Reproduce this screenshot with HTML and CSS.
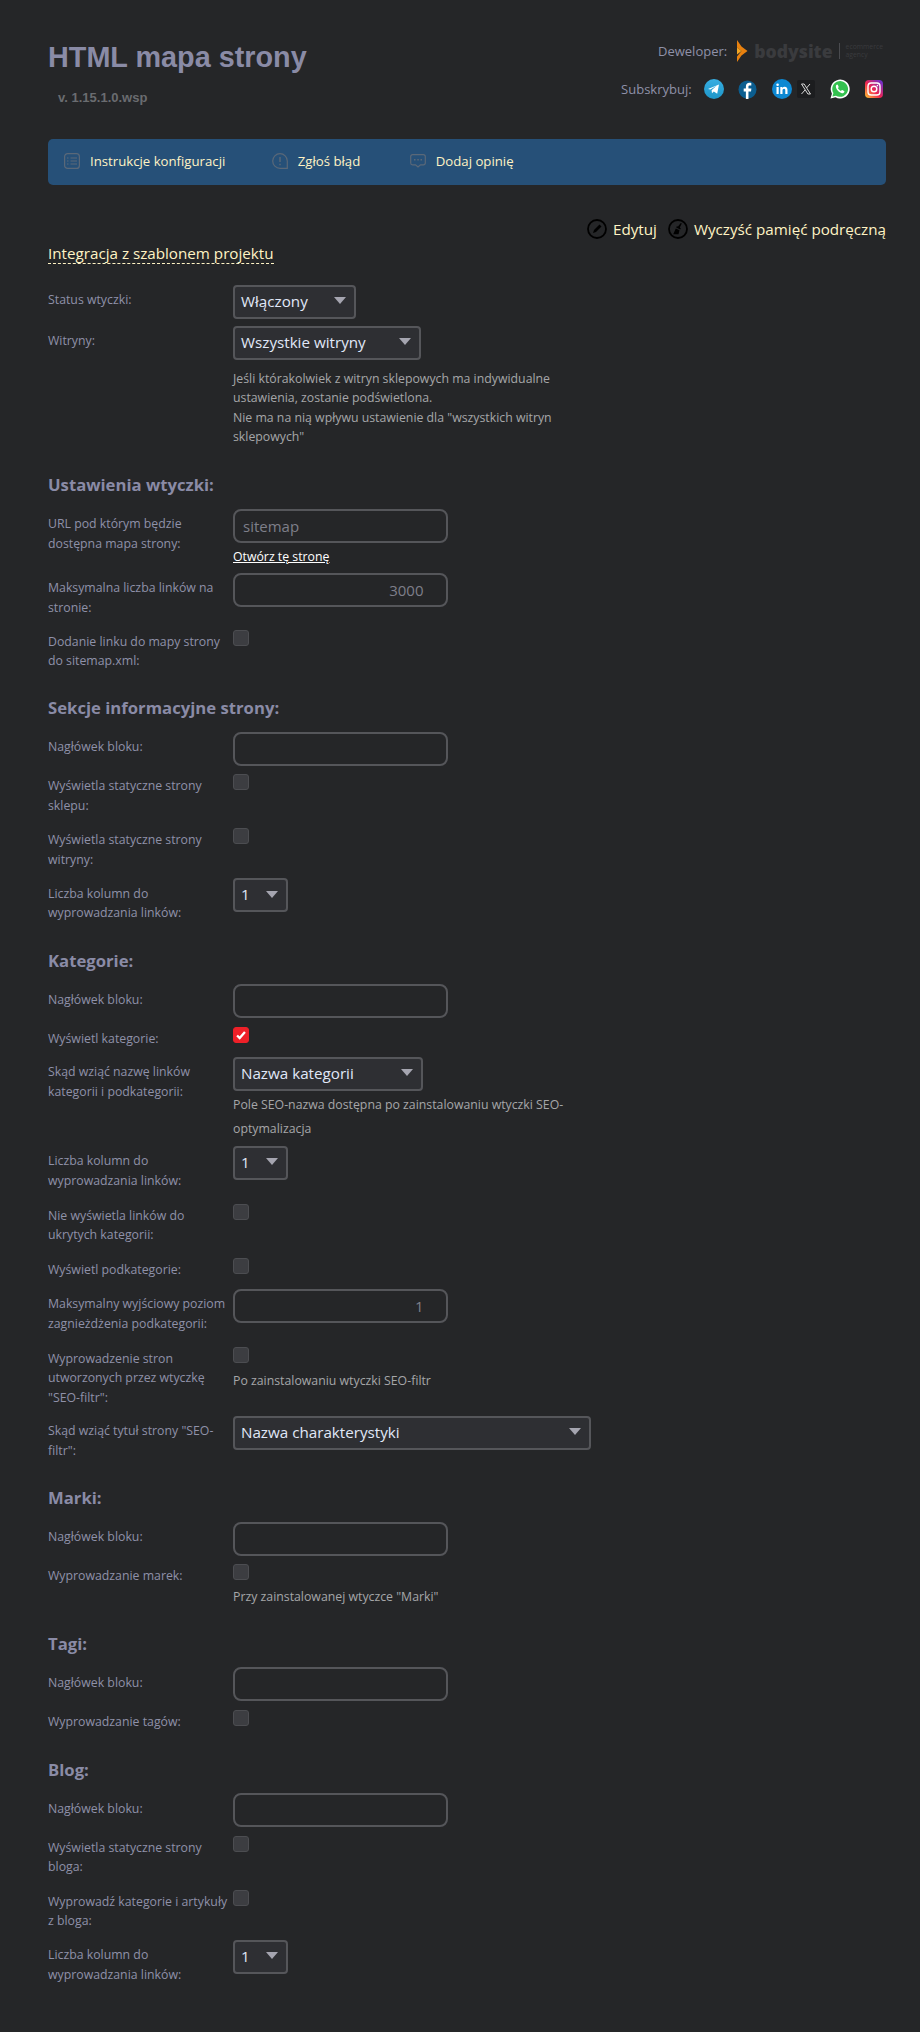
FILE: index.html
```html
<!DOCTYPE html>
<html lang="pl">
<head>
<meta charset="utf-8">
<title>HTML mapa strony</title>
<link rel="stylesheet" href="styles.css">
</head>
<body>
<div class="page">
  <header class="head">
    <div class="head-left">
      <h1>HTML mapa strony</h1>
      <div class="version">v. 1.15.1.0.wsp</div>
    </div>
    <div class="head-right">
      <div class="dev">
        <span>Deweloper:</span>
        <svg class="logo-mark" viewBox="0 0 12 22"><path d="M1 0l4.500 6.500L11.500 11l-6 4.500L1 22v-5.500L5.500 11 1 7.500z" fill="#e8810f"/><path d="M1 7.500L5.500 11 1 14.500z" fill="#f5a623"/></svg>
        <span class="logo-name">bodysite</span>
        <span class="logo-sep"></span>
        <span class="logo-sub">ecommerce<br>agency</span>
      </div>
      <div class="subs">
        <span class="subs-label">Subskrybuj:</span>
        <svg class="soc s-tg" viewBox="0 0 20 20"><defs><linearGradient id="tg" x1="0" y1="0" x2="0" y2="1"><stop offset="0" stop-color="#37aee2"/><stop offset="1" stop-color="#1e96c8"/></linearGradient></defs><circle cx="10" cy="10" r="10" fill="url(#tg)"/><path d="M4 10l11-4.400-1.800 9.200-3.400-2.400-1.800 1.800-.4-3 5-4.500-6.300 3.900z" fill="#fff"/></svg>
        <svg class="soc s-fb" viewBox="0 0 20 20"><circle cx="10" cy="10" r="9.500" fill="#0b5d8f"/><path d="M11 20v-8h2.700l.4-3H11V7.200c0-.9.300-1.400 1.500-1.400H14V3.200c-.5-.1-1.300-.2-2-.2-2.200 0-3.700 1.300-3.700 3.800V9H6v3h2.300v8z" fill="#fff"/></svg>
        <svg class="soc s-in" viewBox="0 0 20 20"><circle cx="10" cy="10" r="10" fill="#0d88d2"/><rect x="4.500" y="8" width="2.200" height="7" fill="#fff"/><circle cx="5.600" cy="5.800" r="1.300" fill="#fff"/><path d="M8.300 8h2.100v1c.5-.8 1.300-1.200 2.300-1.200 2 0 2.800 1.300 2.800 3.300V15h-2.200v-3.500c0-1-.3-1.700-1.200-1.700s-1.600.7-1.600 1.800V15H8.300z" fill="#fff"/></svg>
        <svg class="soc s-x" viewBox="0 0 18 18"><rect width="18" height="18" rx="2" fill="#1c1d1f"/><path d="M4.500 4h2.600l6.400 10h-2.600zM13 4l-3.500 4M8 10l-3.500 4" fill="none" stroke="#d8d8d8" stroke-width="1"/></svg>
        <svg class="soc s-wa" viewBox="0 0 20 20"><path d="M.5 19.500l1.400-4.800A9.500 9.500 0 1 1 5.500 18.300z" fill="#fff"/><path d="M2.400 17.600l1-3.500A7.900 7.900 0 1 1 6 16.700z" fill="#34c14f"/><path d="M7.300 5.500c-.9.200-1.600 1.300-1.400 2.500.4 2.600 3.300 5.600 6 6.200 1.300.2 2.300-.6 2.500-1.500.1-.4-.1-.6-.4-.8l-1.700-.8c-.3-.1-.5 0-.7.200l-.6.800c-1.300-.5-2.500-1.600-3.100-3l.6-.7c.2-.2.200-.5.100-.7l-.7-1.700c-.1-.3-.3-.4-.6-.3z" fill="#fff"/></svg>
        <svg class="soc s-ig" viewBox="0 0 18 18"><defs><linearGradient id="ig" x1="0" y1="1" x2="1" y2="0"><stop offset="0" stop-color="#fdc830"/><stop offset=".45" stop-color="#f0244f"/><stop offset="1" stop-color="#5b32e0"/></linearGradient></defs><rect width="18" height="18" rx="4" fill="url(#ig)"/><rect x="3" y="3" width="12" height="12" rx="3.200" fill="none" stroke="#fff" stroke-width="1.400"/><circle cx="9" cy="9" r="2.800" fill="none" stroke="#fff" stroke-width="1.400"/><circle cx="12.400" cy="5.600" r=".8" fill="#fff"/></svg>
      </div>
    </div>
  </header>

  <nav class="bar">
    <a class="bar-item">
      <svg class="bar-ico" viewBox="0 0 16 16"><rect x=".6" y=".6" width="14.800" height="14.800" rx="3" fill="none" stroke="currentColor" stroke-width="1.200"/><path d="M6.500 5h6.500M6.500 8h6.500M6.500 11h6.500M3 5h1.500M3 8h1.500M3 11h1.500" stroke="currentColor" stroke-width="1.200"/></svg>
      Instrukcje konfiguracji
    </a>
    <a class="bar-item">
      <svg class="bar-ico" viewBox="0 0 16 16"><path d="M8 .7a7.300 7.300 0 0 1 7.300 7.300v7.300H8A7.300 7.300 0 0 1 8 .7z" fill="none" stroke="currentColor" stroke-width="1.200"/><path d="M8 4v5M8 10.800v1.500" stroke="currentColor" stroke-width="1.400"/></svg>
      Zgłoś błąd
    </a>
    <a class="bar-item">
      <svg class="bar-ico" viewBox="0 0 16 14"><path d="M2.500 .7h11a1.800 1.800 0 0 1 1.800 1.800v6.500a1.800 1.800 0 0 1-1.800 1.800H10.500L8 13 5.500 10.800h-3A1.800 1.800 0 0 1 .7 9V2.500A1.800 1.800 0 0 1 2.500.7z" fill="none" stroke="currentColor" stroke-width="1.200"/><path d="M4 5.800h1.500M7.300 5.800h1.500M10.500 5.800H12" stroke="currentColor" stroke-width="1.500"/></svg>
      Dodaj opinię
    </a>
  </nav>

  <div class="actions">
    <a class="action"><svg class="act-ico" viewBox="0 0 20 20"><circle cx="10" cy="10" r="9" fill="none" stroke="#000" stroke-width="1.800"/><path d="M6 14l1-3 5.500-5.500 2 2L9 13z" fill="#000"/></svg>Edytuj</a>
    <a class="action"><svg class="act-ico" viewBox="0 0 20 20"><circle cx="10" cy="10" r="9" fill="none" stroke="#000" stroke-width="1.800"/><path d="M12.800 4l1 .5-2 4 1 .8-.6 1.200-4-2 .6-1.200 1.200.2zM7.800 9.400l3.700 1.900-1 4H5.200z" fill="#000"/></svg>Wyczyść pamięć podręczną</a>
  </div>

  <a class="integ">Integracja z szablonem projektu</a>

  <div class="row h41"><label>Status wtyczki:</label><div class="val"><span class="sel w-status">Włączony</span></div></div>
  <section class="sec">
  <div class="row h135"><label>Witryny:</label><div class="val"><span class="sel w-sites">Wszystkie witryny</span>
    <p class="hint hint-sites">Jeśli którakolwiek z witryn sklepowych ma indywidualne ustawienia, zostanie podświetlona.<br>Nie ma na nią wpływu ustawienie dla "wszystkich witryn sklepowych"</p></div></div>
  </section>

  <section class="sec">
  <h2>Ustawienia wtyczki:</h2>
  <div class="row h64"><label>URL pod którym będzie dostępna mapa strony:</label><div class="val"><span class="inp ph">sitemap</span><a class="open">Otwórz tę stronę</a></div></div>
  <div class="row h57"><label>Maksymalna liczba linków na stronie:</label><div class="val"><span class="inp num">3000</span></div></div>
  <div class="row h54 c"><label>Dodanie linku do mapy strony do sitemap.xml:</label><div class="val"><span class="chk"></span></div></div>
  </section>

  <section class="sec">
  <h2>Sekcje informacyjne strony:</h2>
  <div class="row h43"><label>Nagłówek bloku:</label><div class="val"><span class="inp"></span></div></div>
  <div class="row h54 c"><label>Wyświetla statyczne strony sklepu:</label><div class="val"><span class="chk"></span></div></div>
  <div class="row h50 c"><label>Wyświetla statyczne strony witryny:</label><div class="val"><span class="chk"></span></div></div>
  <div class="row h58"><label>Liczba kolumn do wyprowadzania linków:</label><div class="val"><span class="sel w-one">1</span></div></div>
  </section>

  <section class="sec">
  <h2>Kategorie:</h2>
  <div class="row h43"><label>Nagłówek bloku:</label><div class="val"><span class="inp"></span></div></div>
  <div class="row h30 c"><label>Wyświetl kategorie:</label><div class="val"><span class="chk on"><svg viewBox="0 0 16 16"><path d="M3.500 8.500l3 3 6-7" fill="none" stroke="#fff" stroke-width="2.600"/></svg></span></div></div>
  <div class="row h89"><label>Skąd wziąć nazwę linków kategorii i podkategorii:</label><div class="val"><span class="sel w-cat">Nazwa kategorii</span>
    <p class="hint hint-seo">Pole SEO-nazwa dostępna po zainstalowaniu wtyczki SEO-optymalizacja</p></div></div>
  <div class="row h58"><label>Liczba kolumn do wyprowadzania linków:</label><div class="val"><span class="sel w-one">1</span></div></div>
  <div class="row h54 c"><label>Nie wyświetla linków do ukrytych kategorii:</label><div class="val"><span class="chk"></span></div></div>
  <div class="row h31 c"><label>Wyświetl podkategorie:</label><div class="val"><span class="chk"></span></div></div>
  <div class="row h58"><label>Maksymalny wyjściowy poziom zagnieżdżenia podkategorii:</label><div class="val"><span class="inp num">1</span></div></div>
  <div class="row h69 c"><label>Wyprowadzenie stron utworzonych przez wtyczkę "SEO-filtr":</label><div class="val"><span class="chk"></span><p class="hint hint-f">Po zainstalowaniu wtyczki SEO-filtr</p></div></div>
  <div class="row h58"><label>Skąd wziąć tytuł strony "SEO-filtr":</label><div class="val"><span class="sel w-char">Nazwa charakterystyki</span></div></div>
  </section>

  <section class="sec">
  <h2>Marki:</h2>
  <div class="row h43"><label>Nagłówek bloku:</label><div class="val"><span class="inp"></span></div></div>
  <div class="row h55 c"><label>Wyprowadzanie marek:</label><div class="val"><span class="chk"></span><p class="hint hint-b">Przy zainstalowanej wtyczce "Marki"</p></div></div>
  </section>

  <section class="sec">
  <h2>Tagi:</h2>
  <div class="row h43"><label>Nagłówek bloku:</label><div class="val"><span class="inp"></span></div></div>
  <div class="row h36 c"><label>Wyprowadzanie tagów:</label><div class="val"><span class="chk"></span></div></div>
  </section>

  <section class="sec">
  <h2>Blog:</h2>
  <div class="row h43"><label>Nagłówek bloku:</label><div class="val"><span class="inp"></span></div></div>
  <div class="row h54 c"><label>Wyświetla statyczne strony bloga:</label><div class="val"><span class="chk"></span></div></div>
  <div class="row h50 c"><label>Wyprowadź kategorie i artykuły z bloga:</label><div class="val"><span class="chk"></span></div></div>
  <div class="row h58"><label>Liczba kolumn do wyprowadzania linków:</label><div class="val"><span class="sel w-one">1</span></div></div>
  </section>
</div>
</body>
</html>
```
FILE: styles.css
```css
* { box-sizing: border-box; }
html, body { margin: 0; padding: 0; }
body {
  background: #252628;
  font-family: "Open Sans", "Noto Sans", sans-serif;
  color: #8f91a8;
  height: 2032px;
  overflow: hidden;
}
.page { padding: 0 34px 0 48px; }
.head { display: flex; justify-content: space-between; height: 139px; padding-top: 39px; }
h1 {
  margin: 0;
  font: bold 28.8px/36px "Liberation Sans", sans-serif;
  color: #8a8ba6;
}
.version {
  margin: 15px 0 0 10px;
  font: bold 13px/16px "Liberation Sans", sans-serif;
  color: #6a6c70;
}
.head-right { display: flex; flex-direction: column; align-items: flex-end; padding-right: 3px; }
.dev { display: flex; align-items: center; height: 22px; font-size: 13px; margin-top: 1px; }
.logo-mark { width: 12px; height: 22px; margin-left: 9px; }
.logo-name { margin-left: 6px; font: 800 17.6px/22px "Open Sans", sans-serif; color: #3a3b3e; }
.logo-sep { width: 1px; height: 16px; background: #4a4b4f; margin-left: 6px; }
.logo-sub { margin-left: 6px; font-size: 6.8px; line-height: 8px; color: #3a3b3e; }
.subs { display: flex; align-items: center; height: 20px; margin-top: 17px; font-size: 13px; }
.subs-label { margin-right: 12px; }
.soc { flex: none; }
.s-tg, .s-in, .s-wa { width: 20px; height: 20px; }
.s-fb { width: 19px; height: 19px; }
.s-x, .s-ig { width: 18px; height: 18px; }
.s-fb, .s-in { margin-left: 14.7px; }
.s-x { margin-left: 5px; }
.s-wa { margin-left: 15px; }
.s-ig { margin-left: 15px; }
.bar {
  display: flex;
  align-items: center;
  height: 46px;
  background: #265078;
  border-radius: 5px;
  padding: 0 0 2px 16px;
}
.bar-item { display: flex; align-items: center; font-size: 13.2px; color: #fff3c4; margin-right: 46.5px; }
.bar-item:last-child { margin-left: 3px; }
.bar-ico { width: 16px; height: 16px; margin-right: 10px; color: #5a6878; }
.actions { display: flex; justify-content: flex-end; gap: 11px; margin-top: 33px; height: 22px; }
.action { display: flex; align-items: center; font-size: 15.2px; line-height: 22px; color: #fff3c4; }
.act-ico { width: 20px; height: 20px; margin-right: 6px; }
.integ {
  display: table;
  font-size: 15.2px;
  line-height: 20px;
  color: #fff3c4;
  border-bottom: 1px dashed #fff3c4;
  margin: 3px 0 20.5px;
}
.sec { margin-bottom: 13.5px; }
.row { display: flex; }
.row label { width: 185px; flex: none; font-size: 12.3px; line-height: 19.5px; padding-top: 5.5px; }
.row.c label { padding-top: 2px; }
.val { flex: 1; font-size: 12.3px; min-width: 0; }
.sel {
  display: flex;
  align-items: center;
  position: relative;
  height: 34px;
  border: 2px solid #55565a;
  border-radius: 4px;
  background: #2e2f33;
  color: #e0e8f8;
  font-size: 15.2px;
  padding: 0 0 2px 6px;
}
.sel::after {
  content: "";
  position: absolute;
  right: 8px;
  top: 10.5px;
  border-left: 6px solid transparent;
  border-right: 6px solid transparent;
  border-top: 7px solid #a5a5b0;
}
.w-status { width: 122.5px; }
.w-sites { width: 188px; }
.w-one { width: 54.5px; }
.w-cat { width: 189.5px; }
.w-char { width: 358px; }
.inp {
  display: flex;
  align-items: center;
  width: 215px;
  height: 34px;
  border: 2px solid #55565a;
  border-radius: 8px;
  font-size: 15px;
  color: #7e7f8a;
  padding: 0 8px;
}
.inp.num { justify-content: flex-end; padding-right: 22.5px; }
.open { display: block; margin-top: 5px; font-size: 12.3px; line-height: 18px; color: #fff; text-decoration: underline; }
.chk {
  display: block;
  width: 16px;
  height: 16px;
  border-radius: 3px;
  background: #3c3d41;
  border: 1px solid #4c4d51;
}
.chk.on { background: #ee2028; border-color: #ee2028; }
.chk svg { display: block; width: 14px; height: 14px; }
.hint { margin: 0; font-size: 12.3px; color: #a5a6a8; line-height: 19.5px; width: 335px; }
.hint-sites { margin-top: 9px; }
.hint-seo { line-height: 24px; margin-top: 2px; width: 345px; }
.hint-f { margin-top: 8px; }
.hint-b { margin-top: 6.500px; }
h2 {
  margin: 0 0 12.5px;
  font-size: 16.7px;
  line-height: 22px;
  font-weight: 700;
  color: #8a8ba6;
}
.h30 { height: 30px; }
.h31 { height: 31px; }
.h36 { height: 35.5px; }
.h41 { height: 41px; }
.h43 { height: 42.5px; }
.h50 { height: 50px; }
.h54 { height: 54px; }
.h55 { height: 55px; }
.h57 { height: 57px; }
.h58 { height: 58px; }
.h64 { height: 64px; }
.h69 { height: 69px; }
.h89 { height: 89px; }
.h135 { height: 135px; }
```
